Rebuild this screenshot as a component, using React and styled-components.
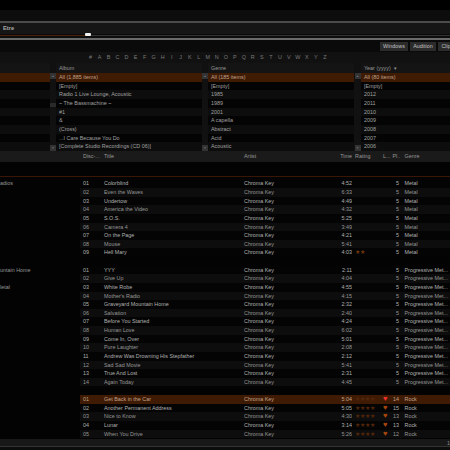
import React from 'react';
import styled, { createGlobalStyle } from 'styled-components';

const GlobalStyle = createGlobalStyle`
  html, body {
    margin: 0;
    width: 450px;
    height: 450px;
    overflow: hidden;
    background: #000;
  }
`;

const Window = styled.div`
  width: 450px;
  height: 450px;
  overflow: hidden;
  display: flex;
  flex-direction: column;
  background: #030303;
  color: #b4b4b4;
  font-family: 'Liberation Sans', Arial, sans-serif;
  font-size: 5.4px;
  line-height: 8.64px;
  white-space: nowrap;
`;

const TopBar = styled.div`
  height: 21px;
  background: linear-gradient(#000 0 10px, #0d0d0d 10px);
`;

const SeekPanel = styled.div`
  height: 19px;
  box-sizing: border-box;
  border-top: 2px solid #4c4c4c;
  border-bottom: 2px solid #6a6a6a;
  background: #161616;
  display: flex;
  flex-direction: column;
`;

const NowPlaying = styled.div`
  height: 11px;
  padding-left: 3px;
  display: flex;
  align-items: center;
  font-size: 5.8px;
  font-weight: bold;
  color: #a8a8a8;
`;

const SeekTrack = styled.div`
  position: relative;
  height: 4px;
  background: linear-gradient(#0a0a0a 0 1px, #333 1px 2px, #0d0d0d 2px);
`;

const SeekFill = styled.div`
  position: absolute;
  left: 0;
  top: 1px;
  height: 1px;
  background: #4a2208;
`;

const SeekKnob = styled.div`
  position: absolute;
  left: 85px;
  top: -1px;
  width: 6px;
  height: 3px;
  border-radius: 1px;
  background: #f2f2f2;
`;

const TabBar = styled.div`
  height: 12px;
  padding: 2px 0 1px 380px;
  box-sizing: border-box;
  display: flex;
  gap: 2px;
  overflow: hidden;
  background: #0a0a0a;
`;

const Tab = styled.div`
  flex: none;
  width: ${(p) => p.$width}px;
  display: flex;
  align-items: center;
  justify-content: center;
  background: #2b2b2b;
  color: #c0c0c0;
`;

const AlphaBar = styled.div`
  height: 11px;
  padding-left: 86px;
  display: flex;
  align-items: center;
  background: #111;
`;

const AlphaLetter = styled.span`
  width: 9.03px;
  text-align: center;
  color: #7a7a7a;
`;

const Browser = styled.div`
  height: 88px;
  display: grid;
  grid-template-columns: 50px 6px 146px 6px 146px 7px 1fr;
  background: #0b0b0b;
`;

const Column = styled.div`
  min-width: 0;
  overflow: hidden;
`;

const ColumnHead = styled.div`
  height: 10px;
  padding-left: 3px;
  display: flex;
  align-items: center;
  gap: 3px;
  background: #141414;
  color: #979797;
`;

const ListRow = styled.div`
  height: 8.67px;
  padding-left: 3px;
  line-height: 8.67px;
  overflow: hidden;
  background: ${(p) => (p.$active ? '#3f1b03' : p.$odd ? '#0d0d0d' : '#040404')};
  color: ${(p) => (p.$active ? '#c0a28c' : '#a0a0a0')};
`;

const Scrollbar = styled.div`
  padding-top: 10px;
  display: flex;
  flex-direction: column;
  align-items: center;
  justify-content: space-between;
  background: #111;
`;

const ScrollButton = styled.div`
  width: 6px;
  height: 6px;
  background: #333;
  color: #777;
  font-size: 3px;
  line-height: 6px;
  text-align: center;
`;

const ScrollThumb = styled.div`
  width: 6px;
  height: 4px;
  margin-bottom: 14px;
  background: #2a2a2a;
`;

const TrackHead = styled.div`
  height: 11px;
  display: grid;
  grid-template-columns: 80px 21px 140px 94px 17px 28px 11px 9px 1fr;
  align-items: center;
  background: #1a1a1a;
  color: #979797;
`;

const Spacer = styled.div`
  height: 14px;
  border-bottom: 1px solid #3a1606;
  margin-bottom: 2.4px;
`;

const Tracks = styled.div`
  flex: 1;
  min-height: 0;
  overflow: hidden;
`;

const TrackRow = styled.div`
  height: 8.64px;
  display: grid;
  grid-template-columns: 80px 21px 140px 94px 17px 28px 11px 9px 1fr;
  align-items: center;
  color: ${(p) => (p.$active ? '#c0a28c' : p.$odd ? '#969696' : '#b0b0b0')};
`;

const GroupCell = styled.div`
  height: 100%;
  color: #969696;
  background: #030303;
`;

const Cell = styled.div`
  height: 100%;
  padding-left: ${(p) => p.$pad ?? 3}px;
  padding-right: ${(p) => p.$padRight ?? 0}px;
  overflow: hidden;
  text-align: ${(p) => p.$align || 'left'};
  background: ${(p) => (p.$active ? '#3f1b03' : p.$odd ? '#0d0d0d' : '#040404')};
`;

const HeadCell = styled.div`
  padding-left: ${(p) => p.$pad ?? 3}px;
  overflow: hidden;
  text-align: ${(p) => p.$align || 'left'};
`;

const Stars = styled.span`
  color: ${(p) => p.$color};
  font-size: 6px;
`;

const Heart = styled.span`
  color: ${(p) => (p.$active ? '#f03030' : '#a8470c')};
  font-size: 7.5px;
`;

const StatusBar = styled.div`
  height: 11px;
  display: flex;
  justify-content: flex-end;
  margin-right: -3px;
  line-height: 8px;
  background: linear-gradient(#181818 0 7px, #333 7px 8px, #0c0c0c 8px);
  color: #8e8e8e;
`;

const albums = ['All  (1,885 items)', '[Empty]', ' Radio 1 Live Lounge, Acoustic', '~ The Bassmachine ~', '#1', '&', '(Cross)', '...I Care Because You Do', '[Complete Studio Recordings (CD 06)]'];
const genres = ['All  (185 items)', '[Empty]', '1985', '1989', '2001', 'A capella', 'Abstract', 'Acid', 'Acoustic'];
const years = ['All  (80 items)', '[Empty]', '2012', '2011', '2010', '2009', '2008', '2007', '2006'];
const letters = '# A B C D E F G H I J K L M N O P Q R S T U V W X Y Z'.split(' ');

const metal = [
  ['Colorblind', '4:52'], ['Even the Waves', '6:33'], ['Undertow', '4:49'], ['America the Video', '4:32'],
  ['S.O.S.', '5:25'], ['Camera 4', '3:49'], ['On the Page', '4:21'], ['Mouse', '5:41'], ['Hell Mary', '4:03'],
];
const prog = [
  ['YYY', '2:11'], ['Give Up', '4:04'], ['White Robe', '4:55'], ['Mother\'s Radio', '4:15'],
  ['Graveyard Mountain Home', '2:32'], ['Salvation', '2:40'], ['Before You Started', '4:24'], ['Human Love', '6:02'],
  ['Come In, Over', '5:01'], ['Pure Laughter', '2:08'], ['Andrew Was Drowning His Stepfather', '2:12'],
  ['Sad Sad Movie', '5:41'], ['True And Lost', '2:31'], ['Again Today', '4:45'],
];
const rock = [
  ['Get Back in the Car', '5:04', 14], ['Another Permanent Address', '5:05', 15], ['Nice to Know', '4:30', 13],
  ['Lunar', '3:14', 13], ['When You Drive', '5:26', 12],
];

const groupLabels = { 0: 'adios', 10: 'untain Home', 12: 'letal' };

const rows = [
  ...metal.map(([title, time], i) => ({ title, time, genre: 'Metal', plays: 5, stars: i === 8 ? 2 : 0, no: i + 1 })),
  null,
  ...prog.map(([title, time], i) => ({ title, time, genre: 'Progressive Met...', plays: 5, stars: 0, no: i + 1 })),
  null,
  ...rock.map(([title, time, plays], i) => ({ title, time, genre: 'Rock', plays, stars: 4, love: true, active: i === 0, no: i + 1 })),
];

const renderList = (items, head) => (
  <Column>
    <ColumnHead>{head}</ColumnHead>
    {items.map((item, i) => (
      <ListRow key={i} $active={i === 0} $odd={i % 2 === 0}>{item}</ListRow>
    ))}
  </Column>
);

const renderScrollbar = (thumb) => (
  <Scrollbar>
    <ScrollButton>▲</ScrollButton>
    {thumb && <ScrollThumb />}
    <ScrollButton>▼</ScrollButton>
  </Scrollbar>
);

const renderTrack = (row, index) => {
  const label = groupLabels[index];
  if (!row) {
    return <TrackRow key={index}><GroupCell /></TrackRow>;
  }
  const cell = { $active: row.active, $odd: index % 2 === 1 };
  return (
    <TrackRow key={index} $active={row.active} $odd={index % 2 === 1}>
      <GroupCell>{label}</GroupCell>
      <Cell {...cell}>{String(row.no).padStart(2, '0')}</Cell>
      <Cell {...cell}>{row.title}</Cell>
      <Cell {...cell}>Chroma Key</Cell>
      <Cell {...cell} $align="right" $pad={0}>{row.time}</Cell>
      <Cell {...cell}>
        {row.stars > 0 && <Stars $color={row.stars === 4 ? '#53260a' : '#70350c'}>{'★'.repeat(row.stars)}</Stars>}
      </Cell>
      <Cell {...cell} $pad={3}>{row.love && <Heart $active={row.active}>♥</Heart>}</Cell>
      <Cell {...cell} $pad={0} $padRight={1} $align="right">{row.plays}</Cell>
      <Cell {...cell} $pad={4.5}>{row.genre}</Cell>
    </TrackRow>
  );
};

const App = () => (
  <Window>
    <GlobalStyle />
    <TopBar />
    <SeekPanel>
      <NowPlaying>Etre</NowPlaying>
      <SeekTrack>
        <SeekFill style={{ width: '85px' }} />
        <SeekKnob />
      </SeekTrack>
    </SeekPanel>
    <TabBar>
      <Tab $width={28}>Windows</Tab>
      <Tab $width={26}>Audition</Tab>
      <Tab $width={30}>Clipboard</Tab>
    </TabBar>
    <AlphaBar>
      {letters.map((letter) => <AlphaLetter key={letter}>{letter}</AlphaLetter>)}
    </AlphaBar>
    <Browser>
      {renderList(Array(9).fill(''), '')}
      {renderScrollbar(true)}
      {renderList(albums, 'Album')}
      {renderScrollbar(false)}
      {renderList(genres, 'Genre')}
      {renderScrollbar(false)}
      {renderList(years, <>Year (yyyy) <span>▾</span></>)}
    </Browser>
    <TrackHead>
      <span />
      <HeadCell>Disc-...</HeadCell>
      <HeadCell>Title</HeadCell>
      <HeadCell>Artist</HeadCell>
      <HeadCell $pad={0} $align="right">Time</HeadCell>
      <HeadCell>Rating</HeadCell>
      <HeadCell>L...</HeadCell>
      <HeadCell $pad={1.5}>Pl...</HeadCell>
      <HeadCell $pad={4.5}>Genre</HeadCell>
    </TrackHead>
    <Spacer />
    <Tracks>{rows.map(renderTrack)}</Tracks>
    <StatusBar>19</StatusBar>
  </Window>
);

export default App;
